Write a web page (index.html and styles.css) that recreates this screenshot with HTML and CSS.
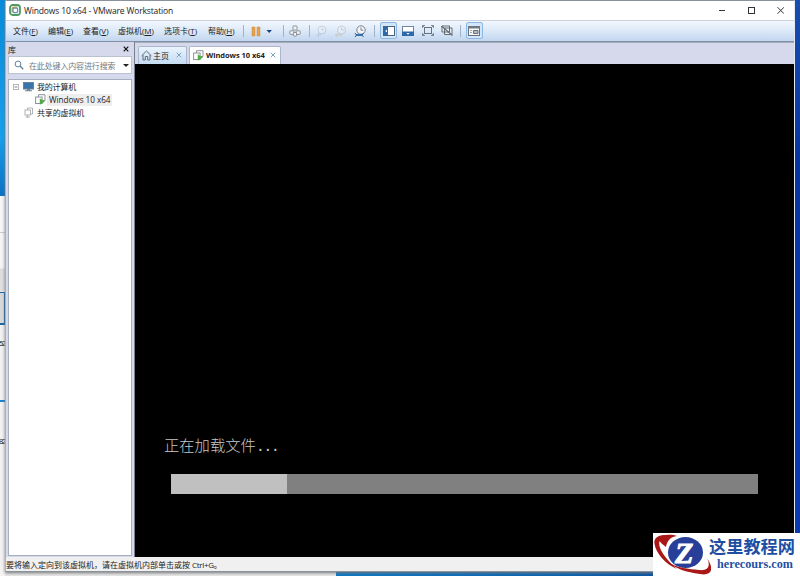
FILE: index.html
```html
<!DOCTYPE html>
<html lang="zh-CN">
<head>
  <meta charset="UTF-8">
  <meta name="viewport" content="width=device-width, initial-scale=1.0">
  <title>Windows 10 x64 - VMware Workstation</title>
  <link rel="stylesheet" href="styles.css">
</head>
<body>
  <div class="desktop">
    <!-- window behind, only its right edge shows -->
    <div class="behind">
      <div class="behind-blue"></div>
      <div class="behind-list">
        <div class="scroll"></div>
        <span class="count">52</span>
        <div class="rule"></div>
        <span class="count last">82</span>
      </div>
    </div>

    <div class="window">
      <header class="titlebar">
        <svg class="logo" width="12" height="12" viewBox="0 0 12 12" fill="none">
          <rect x="1" y="1" width="10" height="10" rx="2.8" stroke="#4f9a62" stroke-width="1.8"/>
          <path d="M3 8.5V5.3Q3 3 5.3 3H8.5" stroke="#d99a35" stroke-width="1.2"/>
          <rect x="4" y="4" width="4.6" height="4.6" rx="1" stroke="#5e91b3" stroke-width="1.3"/>
        </svg>
        <span class="title">Windows 10 x64 - VMware Workstation</span>
        <div class="controls">
          <svg width="66" height="12" viewBox="0 0 66 12" fill="none" stroke="#333">
            <path d="M1 6.5H7"/>
            <rect x="30.5" y="3.5" width="6" height="6"/>
            <path d="M59.5 3.2L66 9.7M66 3.2L59.5 9.7"/>
          </svg>
        </div>
      </header>

      <nav class="toolbar">
        <div class="menu">
          <span>文件<b>(<u>F</u>)</b></span>
          <span>编辑<b>(<u>E</u>)</b></span>
          <span>查看<b>(<u>V</u>)</b></span>
          <span class="wide">虚拟机<b>(<u>M</u>)</b></span>
          <span class="wide">选项卡<b>(<u>T</u>)</b></span>
          <span>帮助<b>(<u>H</u>)</b></span>
        </div>
        <i class="sep"></i>
        <svg class="pause" width="24" height="12" viewBox="0 0 24 12">
          <path d="M1 2H4V11H1ZM6 2H9V11H6Z" fill="#e6a14d" stroke="#ca8a3e" stroke-width=".5"/>
          <path d="M15.5 5H20.9L18.2 8Z" fill="#174384"/>
        </svg>
        <i class="sep"></i>
        <svg class="cad" width="12" height="12" viewBox="0 0 12 12" fill="#f4f5f6" stroke="#818890" stroke-width=".9">
          <rect x="4" y="1" width="4" height="4" rx=".6"/>
          <rect x=".8" y="5.8" width="4" height="3.6" rx=".6"/>
          <rect x="7.2" y="5.8" width="4" height="3.6" rx=".6"/>
          <rect x="4.4" y="7.5" width="3.2" height="3.6" rx=".6"/>
        </svg>
        <i class="sep"></i>
        <svg class="snap" width="54" height="14" viewBox="0 0 54 14" fill="none">
          <g opacity=".4" stroke="#a1a6b1">
            <circle cx="7" cy="6" r="4" fill="#eef2f7"/><path d="M7 3.5V6H9M1 11H6M3.5 9V13"/>
          </g>
          <g opacity=".45" stroke="#a1a6b1">
            <circle cx="26.5" cy="6" r="4" fill="#eef2f7"/><path d="M26.5 3.5V6H29"/><path d="M20.5 11H27M22 9.5L20.5 11L22 12.5" stroke="#c29a66"/>
          </g>
          <circle cx="46" cy="6" r="4.2" stroke="#79818b" fill="#f3f6fa"/>
          <path d="M46 3.4V6.2H48.3" stroke="#79818b"/>
          <path d="M41 11H47" stroke="#2b62a3" stroke-width="1.8"/>
          <path d="M40 9L41.5 11L40 13M48.5 9L47 11L48.5 13" stroke="#2b62a3"/>
        </svg>
        <i class="sep"></i>
        <span class="tool on">
          <svg width="12" height="10" viewBox="0 0 12 10">
            <rect x=".5" y=".5" width="11" height="9" fill="#fff" stroke="#49647f"/>
            <path d="M1 1H5V9H1Z" fill="#2d68aa"/><path d="M4 3.4V6.6L2.2 5Z" fill="#fff"/>
          </svg>
        </span>
        <span class="tool">
          <svg width="12" height="10" viewBox="0 0 12 10">
            <rect x=".5" y=".5" width="11" height="9" fill="#fff" stroke="#71869b"/>
            <path d="M0 5.5H12V10H0Z" fill="#2d68aa"/><path d="M4.5 7H7.5L6 8.7Z" fill="#fff"/>
          </svg>
        </span>
        <span class="tool">
          <svg width="12" height="11" viewBox="0 0 12 11" fill="none" stroke="#68727d">
            <rect x="2.5" y="2.5" width="7" height="6"/>
            <path d="M.5 3V.5H3M11.5 3V.5H9M.5 8V10.5H3M11.5 8V10.5H9" stroke-width=".8"/>
            <path d="M.5 .5L2.5 2.5M11.5 .5L9.5 2.5M.5 10.5L2.5 8.5M11.5 10.5L9.5 8.5" stroke-width=".8"/>
          </svg>
        </span>
        <span class="tool">
          <svg width="12" height="11" viewBox="0 0 12 11" fill="none" stroke="#626c76">
            <path d="M1 1H8.5V7H1Z M3.5 3H11V9.5H3.5Z" fill="#eef1f4"/>
            <path d="M.5 1L11.5 10.5" stroke-width="1.3"/>
          </svg>
        </span>
        <i class="sep"></i>
        <span class="tool on last-tool">
          <svg width="12" height="10" viewBox="0 0 12 10" fill="none" stroke="#64717c">
            <rect x=".5" y=".5" width="11" height="9" fill="#f7f7f7"/>
            <path d="M0 1.5H12" stroke="#737a82" stroke-width="2"/>
            <path d="M2 4.5H4M2 6.5H4" stroke="#a5a8ab"/>
            <path d="M5.5 4.5H10V7.5H5.5Z" fill="#b9bdc1"/>
          </svg>
        </span>
      </nav>

      <div class="main">
        <aside class="library">
          <div class="lib-head"><span>库</span>
            <svg width="6" height="6" viewBox="0 0 6 6"><path d="M.7.7L5.3 5.3M5.3.7L.7 5.3" stroke="#111" stroke-width="1.2"/></svg>
          </div>
          <div class="search">
            <svg width="10" height="10" viewBox="0 0 10 10" fill="none" stroke="#62839f"><circle cx="4" cy="4" r="2.9"/><path d="M6 6L9.2 9.2" stroke-width="1.4"/></svg>
            <span>在此处键入内容进行搜索</span>
            <i class="caret"></i>
          </div>
          <div class="tree">
            <div class="node root">
              <svg width="6" height="6" viewBox="0 0 6 6" fill="#fff" stroke="#aaa" stroke-width=".8"><rect x=".4" y=".4" width="5.2" height="5.2"/><path d="M1.5 3H4.5" stroke="#666"/></svg>
              <svg class="monitor" width="11" height="10" viewBox="0 0 11 10"><rect x=".5" y=".5" width="10" height="6.5" fill="#3974aa" stroke="#67849b"/><path d="M4 7H7V8.3H9V9.3H2V8.3H4Z" fill="#708797"/></svg>
              <span>我的计算机</span>
            </div>
            <div class="node vm">
              <svg width="11" height="11" viewBox="0 0 11 11" fill="#fff" stroke="#8b9299"><path d="M3.5 3V.7H10V6.5H8"/><rect x=".6" y="3" width="6.5" height="6.5"/><path d="M5 4.8L9.5 7.5L5 10.3Z" fill="#4dad41" stroke="#4dad41" stroke-width=".5"/></svg>
              <span class="en">Windows 10 x64</span>
            </div>
            <div class="node shared">
              <svg width="10" height="11" viewBox="0 0 10 11" fill="#fff" stroke="#aeb2b5"><path d="M3.5 3V1H8.5V7H7"/><rect x="1" y="3" width="5.5" height="5"/><path d="M3.5 8V10.5M1.5 10H6"/></svg>
              <span>共享的虚拟机</span>
            </div>
          </div>
        </aside>

        <section class="view">
          <div class="tabs">
            <div class="tab home">
              <svg width="11" height="11" viewBox="0 0 11 11" fill="none" stroke="#636d78"><path d="M.6 5.8L5.5 1L10.4 5.8M2 5V10H4.3V6.5H6.7V10H9V5"/></svg>
              <span>主页</span>
              <svg class="x" width="6" height="6" viewBox="0 0 6 6"><path d="M.7.7L5.3 5.3M5.3.7L.7 5.3" stroke="#7ba4bf"/></svg>
            </div>
            <div class="tab active">
              <svg width="11" height="11" viewBox="0 0 11 11" fill="#fff" stroke="#8b9299"><path d="M3.5 3V.7H10V6.5H8"/><rect x=".6" y="3" width="6.5" height="6.5"/><path d="M5 4.8L9.5 7.5L5 10.3Z" fill="#4dad41" stroke="#4dad41" stroke-width=".5"/></svg>
              <span class="en">Windows 10 x64</span>
              <svg class="x" width="6" height="6" viewBox="0 0 6 6"><path d="M.7.7L5.3 5.3M5.3.7L.7 5.3" stroke="#7ba4bf"/></svg>
            </div>
          </div>
          <div class="screen">
            <p class="loading">正在加载文件<span>...</span></p>
            <div class="progress"><div class="bar"></div></div>
          </div>
        </section>
      </div>

      <footer class="status">要将输入定向到该虚拟机，请在虚拟机内部单击或按 <span>Ctrl+G。</span></footer>
    </div>

    <div class="watermark">
      <svg width="58" height="43" viewBox="0 0 58 43">
        <ellipse cx="32.5" cy="19.5" rx="17.5" ry="15.5" fill="#273f98"/>
        <path d="M17 3C8 0 0 4 1.500 11C3 20 12 31 24 36C16 29 8 20 6.500 13C5 7 9 3 17 3Z" fill="#aa1717"/>
        <path d="M15 29C24 35 36 36 46 37C55 38 58 33 54 25C62 37 58 43 47 41C33 39 23 36 15 29Z" fill="#aa1717"/>
        <path d="M5 6C9 1 19 1 24 3C17 4 14 8 13 14C10 12 7 9 5 6Z" fill="#aa1717"/>
        <text x="22" y="30" class="z">Z</text>
      </svg>
      <div class="mark-text">
        <span class="mark-cn">这里教程网</span>
        <span class="mark-en">herecours.com</span>
      </div>
    </div>
  </div>
</body>
</html>
```

FILE: styles.css
```css
* {
  box-sizing: border-box;
}
body {
  margin: 0;
  font-family: "Open Sans", "Noto Sans CJK SC", sans-serif;
  font-size: 8px;
  color: #222;
}
svg {
  display: block;
  flex: none;
}
.desktop {
  position: relative;
  width: 800px;
  height: 576px;
  overflow: hidden;
  background: linear-gradient(90deg, #e7e7e7 336px, #0877c8 336px, #0563b4 560px, #083b91 790px);
}
.desktop::after {
  content: "";
  position: absolute;
  left: 795px;
  top: 0;
  width: 5px;
  height: 533px;
  background: linear-gradient(#174fae, #0734a0 30%, #083bb0);
}

/* window behind */
.behind {
  width: 5px;
  height: 576px;
  background: #f4f4f4;
}
.behind-blue {
  height: 196px;
  background: linear-gradient(#058bdc, #13a1ed 70%, #0871c5);
}
.behind-list {
  display: flex;
  flex-direction: column;
  height: 375px;
  padding-top: 38px;
  background: linear-gradient(#f7f7f7 36px, #ccc 36px, #ccc 37px, #f5f5f5 37px, #f5f5f5 72px, #ddd 73px, #e0e0e0 95px, #f2f2f2 96px);
}
.scroll {
  height: 33px;
  margin-top: 58px;
  border: solid #1966a5;
  border-width: 1px 1px 2px 0;
  background: #d8d8d8;
}
.count {
  height: 12px;
  margin: 13px 0 0 -1px;
  font-family: "Liberation Sans", sans-serif;
  font-size: 7.5px;
  letter-spacing: -1.2px;
  line-height: 12px;
}
.rule {
  height: 2px;
  margin-top: 50px;
  background: #1a81cb;
}
.count.last {
  margin-top: 34px;
}

/* main window */
.window {
  position: absolute;
  left: 5px;
  top: 0;
  display: flex;
  flex-direction: column;
  width: 790px;
  height: 572px;
  border: 1px solid #8a929c;
  border-right-color: #e3e8f1;
  border-left-color: #a9b1c1;
  background: #d5d9eb;
  box-shadow: 0 1px 3px #777;
}
.titlebar {
  display: flex;
  align-items: center;
  height: 19px;
  padding: 0 10px 1px 3px;
  background: #fff;
}
.title {
  width: 150px;
  margin-left: 3px;
  font-size: 8.5px;
  letter-spacing: -0.15px;
  white-space: nowrap;
}
.controls {
  margin-left: auto;
}
.toolbar {
  display: flex;
  align-items: center;
  height: 22px;
  padding: 0 0 1px 7px;
  border-top: 1px solid #c8d1dc;
  border-bottom: 1px solid #8190a5;
  background: linear-gradient(#f3f8fe, #d9e7f7 55%, #c2d6ef);
}
.menu {
  display: flex;
  gap: 10px;
  width: 230px;
}
.menu span {
  width: 25px;
  white-space: nowrap;
}
.menu span b {
  font-weight: normal;
}
.menu .wide {
  width: 36px;
}
.menu .wide + .wide {
  width: 34px;
}
.sep {
  flex: none;
  width: 1px;
  height: 12px;
  background: #a0b1c7;
}
.pause {
  margin: 0 8px 0 7px;
}
.cad {
  margin: 0 8px 0 5px;
}
.snap {
  margin: 0 5px 0 5px;
}
.tool {
  display: flex;
  flex: none;
  align-items: center;
  justify-content: center;
  width: 17px;
  height: 17px;
  margin-left: 2.5px;
}
.sep + .tool {
  margin-left: 5px;
}
.tool.on {
  border: 1px solid #8bb8e4;
  border-radius: 2px;
  background: #d3e6f8;
}
.tool + .sep {
  margin-left: 4px;
}
.sep + .last-tool {
  margin-left: 5px;
}

.main {
  display: flex;
  height: 515px;
}
.library {
  display: flex;
  flex-direction: column;
  width: 128px;
  padding: 0 2px 1px;
}
.lib-head {
  display: flex;
  align-items: center;
  justify-content: space-between;
  height: 14px;
  padding-right: 3px;
}
.search {
  display: flex;
  align-items: center;
  height: 18px;
  padding: 0 2px 0 5px;
  border: 1px solid #bac1cf;
  background: #fff;
  color: #777;
}
.search span {
  width: 91px;
  margin: 0 4px 0 5px;
  white-space: nowrap;
  letter-spacing: -0.15px;
}
.caret {
  border: 3px solid transparent;
  border-top-color: #222;
  border-bottom: 0;
}
.tree {
  flex: 1;
  margin-top: 5px;
  padding: 0 4px;
  border: 1px solid #a6afbd;
  background: #fff;
}
.node {
  display: flex;
  align-items: center;
  height: 13px;
  white-space: nowrap;
}
.monitor {
  margin: 0 3px 0 4px;
}
.root span {
  letter-spacing: -0.2px;
}
.vm {
  padding-left: 22px;
}
.vm .en {
  width: 65px;
  margin-left: 1px;
  padding-left: 2px;
  background: #eee;
  font-size: 8.2px;
  letter-spacing: -0.05px;
  line-height: 12px;
}
.shared {
  gap: 3px;
  padding-left: 11px;
}
.shared span {
  letter-spacing: -0.15px;
}

.view {
  flex: 1;
  display: flex;
  flex-direction: column;
  border-left: 1px solid #77808c;
}
.tabs {
  display: flex;
  align-items: flex-end;
  gap: 2px;
  height: 22px;
  padding-left: 3px;
  border-top: 1px solid #a4adbb;
}
.tab {
  display: flex;
  align-items: center;
  height: 18px;
  padding: 0 4px 1px;
  border: 1px solid #a8b7cc;
  border-bottom: 0;
  border-radius: 2px 2px 0 0;
  background: linear-gradient(#eaf4fd, #c5dcf2);
}
.home {
  width: 49px;
  padding-left: 2px;
}
.home span {
  margin-left: 1px;
}
.tab.active {
  width: 92px;
  padding-left: 3px;
  background: #fff;
}
.active .en {
  width: 61px;
  margin-left: 2px;
  font-size: 7.5px;
  font-weight: bold;
  letter-spacing: -0.05px;
  white-space: nowrap;
}
.x {
  margin-left: auto;
}
.screen {
  flex: 1;
  padding: 371px 36px 0 29px;
  background: #000;
}
.loading {
  display: flex;
  height: 24px;
  margin: 0;
  color: #c8c8c8;
  font-family: "Liberation Mono", "Noto Sans CJK SC", monospace;
  font-size: 15.3px;
  font-weight: 300;
  line-height: 24px;
  white-space: nowrap;
}
.loading span {
  letter-spacing: -1.7px;
}
.progress {
  height: 20px;
  margin: 15px 0 0 7px;
  background: #808080;
}
.bar {
  width: 116px;
  height: 100%;
  background: #c0c0c0;
}
.status {
  height: 14px;
  background: #f0f0f0;
  line-height: 16px;
  white-space: nowrap;
}
.status span {
  letter-spacing: -0.3px;
}

/* site mark */
.watermark {
  position: absolute;
  z-index: 2;
  left: 653px;
  top: 533px;
  display: flex;
  width: 147px;
  height: 43px;
  background: #fff;
}
.z {
  fill: #fff;
  stroke: #fff;
  stroke-width: 1;
  font: italic bold 30px "Liberation Serif", serif;
}
.mark-text {
  display: flex;
  flex-direction: column;
  width: 89px;
  margin-left: -2px;
  white-space: nowrap;
  color: #1e4fa3;
}
.mark-cn {
  height: 24px;
  font-size: 17.2px;
  font-weight: bold;
  line-height: 28px;
}
.mark-en {
  padding-left: 8px;
  font: bold 12.2px/14px "Liberation Serif", serif;
}
```
